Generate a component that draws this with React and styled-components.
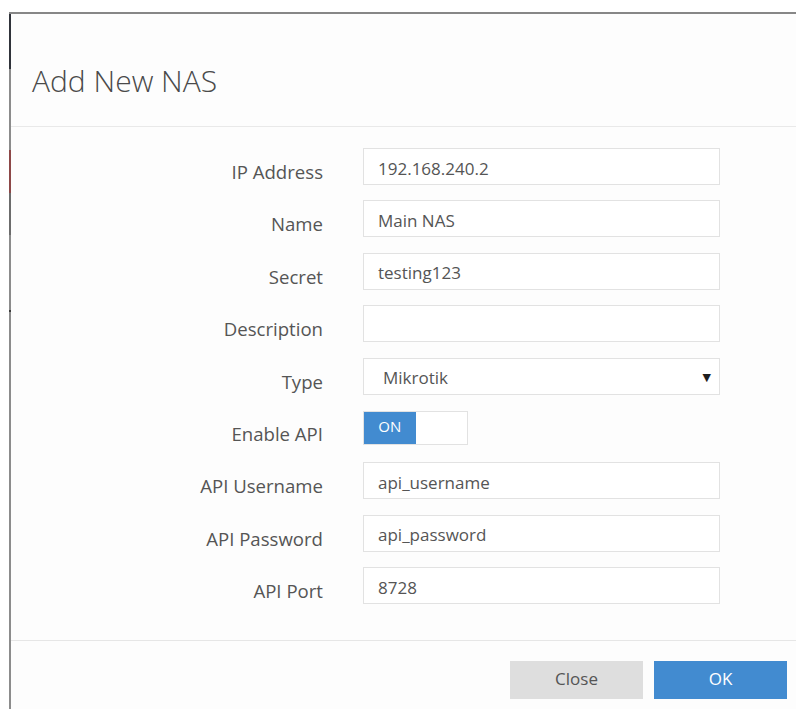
import React from 'react';
import styled, { createGlobalStyle } from 'styled-components';

const GlobalStyle = createGlobalStyle`
    html, body {
        margin:0;
        padding:0;
        background:#fff;
    }
    body {
        font-family:"Open Sans", "Liberation Sans", sans-serif;
        color:#555;
    }
`

const fields = [
    { label: 'IP Address', value: '192.168.240.2' },
    { label: 'Name', value: 'Main NAS' },
    { label: 'Secret', value: 'testing123' },
    { label: 'Description', value: '' },
    { label: 'Type', kind: 'select', value: 'Mikrotik' },
    { label: 'Enable API', kind: 'toggle', value: true },
    { label: 'API Username', value: 'api_username' },
    { label: 'API Password', value: 'api_password' },
    { label: 'API Port', value: '8728' },
];

const FormRow = ({ item }) => {
    let control;
    if(item.kind === 'select') {
        control = (
            <SelectBox>
                <span>{item.value}</span>
                <Caret>▼</Caret>
            </SelectBox>
        );
    } else if(item.kind === 'toggle') {
        control = (
            <Toggle>
                <ToggleHalf on={item.value ? 1 : 0}>ON</ToggleHalf>
                <ToggleHalf />
            </Toggle>
        );
    } else {
        control = <TextInput type='text' value={item.value} readOnly />;
    }

    return(
        <Row>
            <Label>{item.label}</Label>
            {control}
        </Row>
    )
}

const App = () => {
    return(
        <>
            <GlobalStyle />
            <Page>
                <Frame>
                    <Edge />
                    <Dialog>
                        <Header>
                            <h4>Add New NAS</h4>
                        </Header>
                        <Body>
                            {fields.map((item) => <FormRow key={item.label} item={item} />)}
                        </Body>
                        <Footer>
                            <Button>Close</Button>
                            <Button primary>OK</Button>
                        </Footer>
                    </Dialog>
                </Frame>
            </Page>
        </>
    )
}

export default App;

const Page = styled.div`
    padding:12px 0 0 9px;
    min-height:709px;
    box-sizing:border-box;
    overflow:hidden;
`

const Frame = styled.div`
    display:flex;
    border-top:2px solid #878787;
    min-height:695px;
`

// strip of the page behind the dialog, showing at its left side
const Edge = styled.div`
    width:2px;
    flex:none;
    background:linear-gradient(to bottom,
        #30333a 0, #30333a 55px,
        #8c8c8c 55px, #8c8c8c 136px,
        #8d4848 136px, #8d4848 179px,
        #6c6c6c 179px, #6c6c6c 221px,
        #8c8c8c 221px, #8c8c8c 296px,
        #3c3c3c 296px, #3c3c3c 298px,
        #8c8c8c 298px);
`

const Dialog = styled.div`
    flex:1;
    display:flex;
    flex-direction:column;
    background:#fdfdfd;
`

const Header = styled.div`
    height:113px;
    box-sizing:border-box;
    padding:52px 21px 0;
    border-bottom:1px solid #e9e9e9;

    & > h4 {
        margin:0;
        font-size:30px;
        line-height:30px;
        font-weight:300;
        color:#4a4a4a;
    }
`

const Body = styled.div`
    display:flex;
    flex-direction:column;
    gap:15.4px;
    padding:21px 0 36px;
    border-bottom:1px solid #e6e6e6;
`

const Row = styled.div`
    display:flex;
    align-items:flex-start;
    height:37px;
`

const Label = styled.label`
    width:312px;
    flex:none;
    margin-right:40px;
    padding-top:11px;
    text-align:right;
    font-size:18.6px;
    line-height:26px;
    color:#555;
`

const TextInput = styled.input`
    width:357px;
    height:37px;
    box-sizing:border-box;
    padding:3px 14px 0;
    border:1px solid #e2e2e2;
    border-radius:0;
    background:#fff;
    font-family:"Open Sans", "Liberation Sans", sans-serif;
    font-size:17px;
    color:#555;
    outline:none;
`

const SelectBox = styled.div`
    width:357px;
    height:37px;
    box-sizing:border-box;
    display:flex;
    align-items:center;
    justify-content:space-between;
    padding:2px 8px 0 19px;
    border:1px solid #e2e2e2;
    background:#fff;
    font-size:17px;
    color:#555;
`

const Caret = styled.span`
    font-size:11px;
    color:#1e1e1e;
    font-family:"DejaVu Sans", sans-serif;
`

const Toggle = styled.div`
    display:flex;
    width:105px;
    height:34px;
    margin-top:1px;
    box-sizing:border-box;
    border:1px solid #e2e2e2;
    background:#fff;
`

const ToggleHalf = styled.div`
    width:52px;
    display:flex;
    align-items:center;
    justify-content:center;
    padding-bottom:3px;
    box-sizing:border-box;
    font-size:15px;
    color:#fff;
    background:${props => props.on ? '#428bd0' : 'transparent'};
`

const Footer = styled.div`
    display:flex;
    justify-content:flex-end;
    gap:11px;
    padding:20px 9px 12px;
`

const Button = styled.button`
    width:133px;
    height:38px;
    border:none;
    border-radius:0;
    padding:0 0 4px;
    font-family:"Open Sans", "Liberation Sans", sans-serif;
    font-size:17px;
    color:${props => props.primary ? '#fff' : '#555'};
    background:${props => props.primary ? '#428bd0' : '#dedede'};
    cursor:pointer;
`
